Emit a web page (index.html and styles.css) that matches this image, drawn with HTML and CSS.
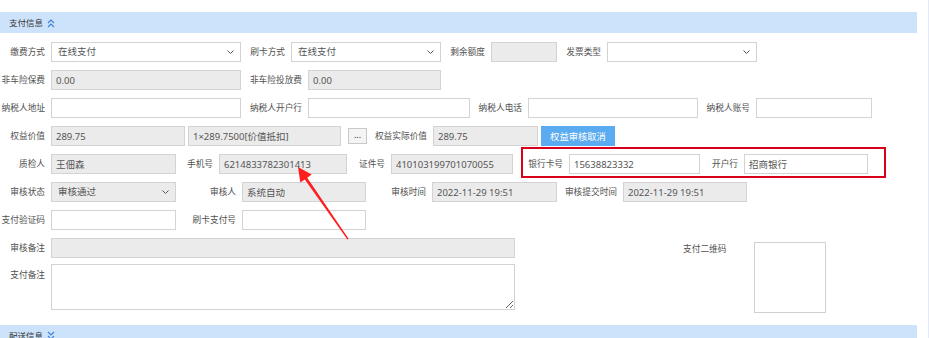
FILE: index.html
```html
<!DOCTYPE html>
<html lang="zh-CN">
<head>
<meta charset="utf-8">
<title>支付信息</title>
<link rel="stylesheet" href="styles.css">
</head>
<body>
<div class="page">
  <div class="section-bar">
    <span class="bar-title">支付信息</span>
    <svg class="chev" viewBox="0 0 8 10" width="8" height="10"><polyline points="1,5 4,2 7,5" fill="none" stroke="#3b7fd6" stroke-width="1.1"/><polyline points="1,9 4,6 7,9" fill="none" stroke="#3b7fd6" stroke-width="1.1"/></svg>
  </div>

  <div class="form">
    <div class="row">
      <span class="lbl lw51">缴费方式</span>
      <div class="ctl sel w190"><span>在线支付</span><svg class="caret" viewBox="0 0 7 4" width="7" height="4"><polyline points="0.5,0.5 3.5,3.5 6.5,0.5" fill="none" stroke="#555" stroke-width="1"/></svg></div>
      <span class="lbl lw50">刷卡方式</span>
      <div class="ctl sel w150"><span>在线支付</span><svg class="caret" viewBox="0 0 7 4" width="7" height="4"><polyline points="0.5,0.5 3.5,3.5 6.5,0.5" fill="none" stroke="#555" stroke-width="1"/></svg></div>
      <span class="lbl lw50">剩余额度</span>
      <input class="ctl ro w66" value="" readonly>
      <span class="lbl lw50">发票类型</span>
      <div class="ctl sel w150"><span></span><svg class="caret" viewBox="0 0 7 4" width="7" height="4"><polyline points="0.5,0.5 3.5,3.5 6.5,0.5" fill="none" stroke="#555" stroke-width="1"/></svg></div>
    </div>

    <div class="row">
      <span class="lbl lw51">非车险保费</span>
      <input class="ctl ro w190" value="0.00" readonly>
      <span class="lbl lw67">非车险投放费</span>
      <input class="ctl ro w133" value="0.00" readonly>
    </div>

    <div class="row">
      <span class="lbl lw51">纳税人地址</span>
      <input class="ctl w190" value="">
      <span class="lbl lw67">纳税人开户行</span>
      <input class="ctl w162" value="">
      <span class="lbl lw58">纳税人电话</span>
      <input class="ctl w170" value="">
      <span class="lbl lw58">纳税人账号</span>
      <input class="ctl w116" value="">
    </div>

    <div class="row">
      <span class="lbl lw51">权益价值</span>
      <input class="ctl ro w134" value="289.75" readonly>
      <input class="ctl ro w153 ml3" value="1×289.7500[价值抵扣]" readonly>
      <div class="btn-dots">...</div>
      <span class="lbl lw66">权益实际价值</span>
      <input class="ctl ro w105" value="289.75" readonly>
      <div class="btn-blue">权益审核取消</div>
    </div>

    <div class="row">
      <span class="lbl lw51">质检人</span>
      <input class="ctl ro w125" value="王佃森" readonly>
      <span class="lbl lw43">手机号</span>
      <input class="ctl ro w128" value="6214833782301413" readonly>
      <span class="lbl lw44">证件号</span>
      <input class="ctl ro w122" value="410103199701070055" readonly>
      <div class="mark">
        <span class="lbl lw46">银行卡号</span>
        <input class="ctl w131" value="15638823332">
        <span class="lbl lw44">开户行</span>
        <input class="ctl w124" value="招商银行">
      </div>
    </div>

    <div class="row">
      <span class="lbl lw51">审核状态</span>
      <div class="ctl sel ro w125"><span>审核通过</span><svg class="caret" viewBox="0 0 7 4" width="7" height="4"><polyline points="0.5,0.5 3.5,3.5 6.5,0.5" fill="none" stroke="#555" stroke-width="1"/></svg></div>
      <span class="lbl lw66">审核人</span>
      <input class="ctl ro w124" value="系统自动" readonly>
      <span class="lbl lw66">审核时间</span>
      <input class="ctl ro w125" value="2022-11-29 19:51" readonly>
      <span class="lbl lw66">审核提交时间</span>
      <input class="ctl ro w124" value="2022-11-29 19:51" readonly>
    </div>

    <div class="row">
      <span class="lbl lw51">支付验证码</span>
      <input class="ctl w125" value="">
      <span class="lbl lw66">刷卡支付号</span>
      <input class="ctl w124" value="">
    </div>

    <div class="lower">
      <div class="lower-left">
        <div class="row row8">
          <span class="lbl lw51">审核备注</span>
          <input class="ctl ro w464" value="" readonly>
        </div>
        <div class="row row9">
          <span class="lbl lw51 lbl-top">支付备注</span>
          <textarea class="ctl w464 ta"></textarea>
        </div>
      </div>
      <div class="qr">
        <span class="qr-label">支付二维码</span>
        <div class="qr-box"></div>
      </div>
    </div>
  </div>

  <div class="section-bar">
    <span class="bar-title">配送信息</span>
    <svg class="chev" viewBox="0 0 8 10" width="8" height="10"><polyline points="1,1 4,4 7,1" fill="none" stroke="#3b7fd6" stroke-width="1.1"/><polyline points="1,5 4,8 7,5" fill="none" stroke="#3b7fd6" stroke-width="1.1"/></svg>
  </div>

  <svg class="annot" viewBox="0 0 929 338" width="929" height="338">
    <polygon points="298,167 311.7,174.5 307.2,177.7 348.6,238.7 347.4,239.5 304.8,179.4 300.3,182.5" fill="#ff1e1e"/>
  </svg>
</div>
</body>
</html>
```

FILE: styles.css
```css
* { box-sizing: border-box; }
html, body { margin: 0; padding: 0; background: #fff; }
body {
  font-family: "Noto Sans CJK SC", "Noto Sans", sans-serif;
  color: #444;
  overflow: hidden;
}
.page {
  position: relative;
  width: 929px;
  height: 338px;
  padding-top: 12px;
  border-right: 1px solid #e3eaf6;
  overflow: hidden;
}
.section-bar {
  width: 917px;
  height: 21px;
  background: #cde3fb;
  display: flex;
  align-items: center;
  padding-left: 9px;
  font-size: 8.5px;
  color: #333;
}
.bar-title { line-height: 21px; }
.chev { margin-left: 4px; flex: none; }

.form { width: 917px; padding-top: 9px; }
.row {
  display: flex;
  align-items: center;
  height: 20px;
  margin-bottom: 8px;
}
.lbl {
  flex: none;
  text-align: right;
  padding-right: 6px;
  font-size: 8.7px;
  line-height: 20px;
  white-space: nowrap;
  color: #505050;
}
.lw43 { width: 43px; }
.lw44 { width: 44px; }
.lw46 { width: 46px; }
.lw50 { width: 50px; }
.lw51 { width: 51px; }
.lw58 { width: 58px; }
.lw66 { width: 66px; }
.lw67 { width: 67px; }

.ctl {
  flex: none;
  height: 20px;
  margin: 0;
  border: 1px solid #d3d3d3;
  border-radius: 0;
  background: #fff;
  font-family: "Noto Sans", "Noto Sans CJK SC", sans-serif;
  font-size: 9.5px;
  color: #555;
  padding: 0 4px;
  line-height: 18px;
  outline: none;
}
.ro { background: #ebebeb; }
.sel {
  display: flex;
  align-items: center;
  justify-content: space-between;
  padding: 0 6px;
}
.caret { flex: none; }
.ml3 { margin-left: 3px; }

.w66 { width: 66px; }
.w105 { width: 105px; }
.w116 { width: 116px; }
.w122 { width: 122px; }
.w124 { width: 124px; }
.w125 { width: 125px; }
.w128 { width: 128px; }
.w131 { width: 131px; }
.w133 { width: 133px; }
.w134 { width: 134px; }
.w150 { width: 150px; }
.w153 { width: 153px; }
.w162 { width: 162px; }
.w170 { width: 170px; }
.w190 { width: 190px; }
.w464 { width: 464px; }

.btn-dots {
  flex: none;
  width: 19px;
  height: 16px;
  margin-left: 7px;
  border: 1px solid #c9c9c9;
  background: #f4f4f4;
  font-family: "Noto Sans", sans-serif;
  font-size: 9px;
  line-height: 11px;
  text-align: center;
  color: #333;
}
.btn-blue {
  flex: none;
  width: 74px;
  height: 20px;
  margin-left: 3px;
  background: #5aabf0;
  color: #fff;
  font-size: 9.3px;
  line-height: 20px;
  text-align: center;
}

.mark {
  flex: none;
  display: flex;
  align-items: center;
  height: 31px;
  margin-left: 8px;
  margin-top: -7px;
  margin-bottom: -4px;
  padding: 5px 16px 2px 0;
  border: 2px solid #d9001b;
}

.lower { display: flex; height: 87px; }
.lower-left { flex: none; }
.row8 { margin-bottom: 6px; }
.row9 { align-items: flex-start; height: 46px; margin-bottom: 0; }
.lbl-top { margin-top: 1px; }
.ta { height: 46px; resize: both; }

.qr { display: flex; align-items: flex-start; margin-left: 168px; }
.qr-label {
  font-size: 8.7px;
  line-height: 20px;
  margin-top: 1px;
  color: #505050;
  white-space: nowrap;
}
.qr-box {
  width: 72px;
  height: 71px;
  margin-left: 28px;
  margin-top: 4px;
  border: 1px solid #d0d0d0;
  background: #fff;
}

.annot {
  position: absolute;
  left: 0;
  top: 0;
  pointer-events: none;
}
```
